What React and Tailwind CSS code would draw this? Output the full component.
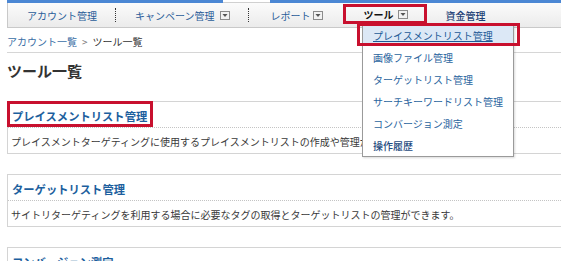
const DropIcon = () => (
  <svg width="10" height="9" viewBox="0 0 10 9" className="shrink-0">
    <rect x="0.5" y="0.5" width="9" height="8" fill="#f2f2f2" stroke="#8c8c8c" />
    <path d="M2.5 3 L7.5 3 L5 6 Z" fill="#555" />
  </svg>
);

const Sep = ({ className }) => (
  <span className={"h-[14px] w-0 border-l border-dotted border-[#333] " + className} />
);

const menuItems = [
  "画像ファイル管理",
  "ターゲットリスト管理",
  "サーチキーワードリスト管理",
  "コンバージョン測定",
];

const Card = ({ title, desc, className }) => (
  <div className={"border border-[#d4d4d4] bg-white " + className}>
    <div className="pl-[4px] pt-[6px] pb-[3px] leading-[16px] text-[11.3px] font-bold text-[#1d5f9e] border-b border-dotted border-[#c4c4c4]">
      {title}
    </div>
    <div className="pl-[3px] pt-[7px] pb-[4px] leading-[14px] text-[10px] text-[#3a3a3a] whitespace-nowrap">
      {desc}
    </div>
  </div>
);

export default function App() {
  return (
    <div
      className="relative w-[561px] h-[261px] overflow-hidden bg-white"
      style={{ fontFamily: '"Noto Sans CJK JP", "Noto Sans", sans-serif' }}
    >
      <div className="pl-[7px] w-[620px]">
        {/* top nav */}
        <div className="relative border-t-[3px] border-[#4b87d4]">
          <div className="absolute -top-[3px] left-[216px] w-[47px] h-[3px] bg-white border-b border-[#d0d0d0]" />
          <div className="flex items-center h-[25px] border-l border-b border-[#c9c9c9] bg-gradient-to-b from-[#fbfbfb] to-[#ebebeb] text-[10px] text-[#2a5d99] whitespace-nowrap">
            <span className="ml-[19px]">アカウント管理</span>
            <Sep className="ml-[18px]" />
            <span className="ml-[19px]">キャンペーン管理</span>
            <span className="ml-[5px]"><DropIcon /></span>
            <Sep className="ml-[18px]" />
            <span className="ml-[22px]">レポート</span>
            <span className="ml-[2px]"><DropIcon /></span>
            <div className="ml-[20px] self-start mt-[1px] h-[20px] w-[84px] border-[3px] border-[#c8102e] flex items-center">
              <span className="ml-[18px] font-bold text-[#111]">ツール</span>
              <span className="ml-[4px]"><DropIcon /></span>
            </div>
            <span className="ml-[19px] font-medium text-[#1b3f75]">資金管理</span>
          </div>
        </div>

        {/* breadcrumb */}
        <div className="pt-[7px] pb-[3px] leading-[14px] text-[10px] border-b border-[#d6d6d6] whitespace-nowrap">
          <span className="text-[#3a6ea5]">アカウント一覧</span>
          <span className="text-[#777] mx-[5px]">&gt;</span>
          <span className="text-[#333]">ツール一覧</span>
        </div>

        <h1 className="mt-[8px] leading-[20px] text-[15px] font-bold text-[#333]">ツール一覧</h1>

        <Card
          className="mt-[20px]"
          title="プレイスメントリスト管理"
          desc="プレイスメントターゲティングに使用するプレイスメントリストの作成や管理ができます。"
        />
        <Card
          className="mt-[20px]"
          title="ターゲットリスト管理"
          desc="サイトリターゲティングを利用する場合に必要なタグの取得とターゲットリストの管理ができます。"
        />
        <Card
          className="mt-[20px]"
          title="コンバージョン測定"
          desc="コンバージョン測定に必要なタグの取得と管理ができます。"
        />
      </div>

      {/* red highlight on card title */}
      <div className="absolute left-[7px] top-[101px] w-[146px] h-[26px] border-[3px] border-[#c8102e]" />

      {/* dropdown menu */}
      <div className="absolute left-[362px] top-[24px] w-[152px] h-[133px] bg-white border border-[#9a9a9a] shadow-[1px_1px_2px_rgba(0,0,0,0.15)] text-[10px] whitespace-nowrap">
        <div className="h-[21px] bg-[#dce8f6] pl-[10px] flex items-center text-[#1d5a96] underline">
          プレイスメントリスト管理
        </div>
        {menuItems.map((m) => (
          <div key={m} className="h-[22px] pl-[10px] flex items-center text-[#2a649e]">
            {m}
          </div>
        ))}
        <div className="h-[22px] pl-[10px] flex items-center text-[#1d4a80] font-medium">操作履歴</div>
      </div>
      <div className="absolute left-[357px] top-[23px] w-[163px] h-[23px] border-[3px] border-[#c8102e]" />
    </div>
  );
}
